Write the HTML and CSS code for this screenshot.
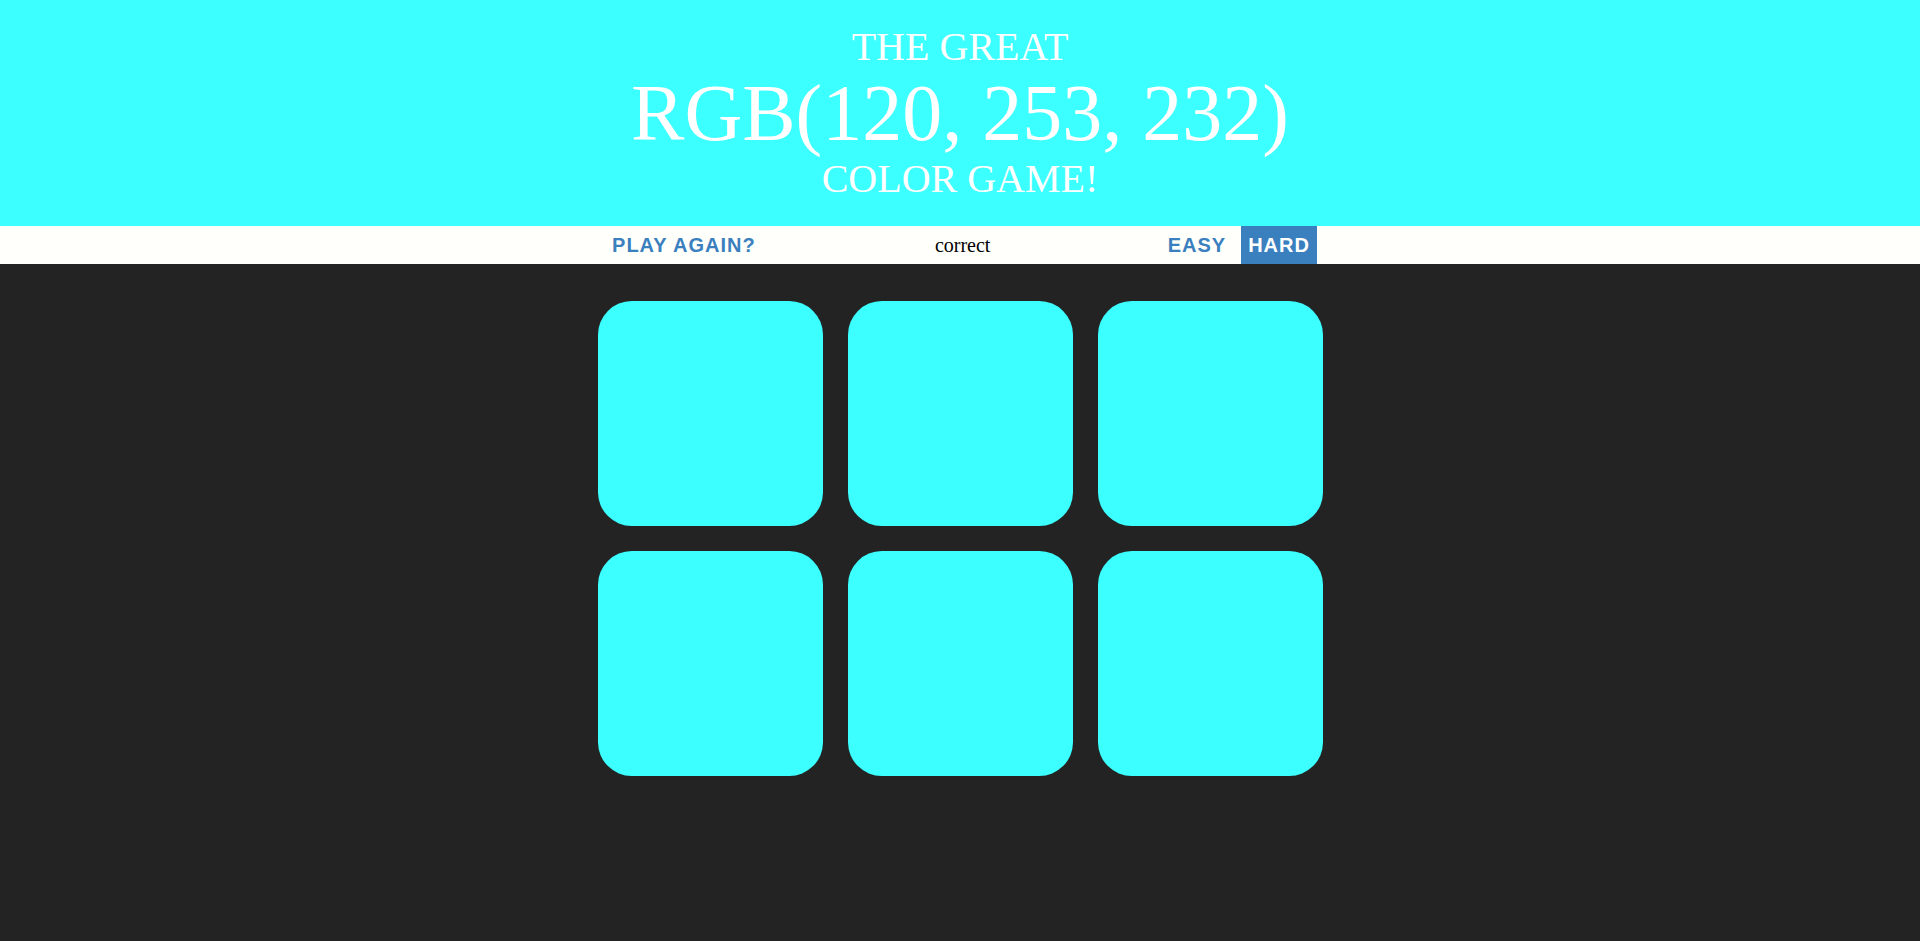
FILE: index.html
```html
<!DOCTYPE html>
<html lang="en">
<head>
<meta charset="utf-8">
<title>Color Game</title>
<link rel="stylesheet" href="styles.css">
</head>
<body>
<h1 class="header">
  <span class="line">The Great</span>
  <span class="line color-display">RGB(120, 253, 232)</span>
  <span class="line">Color Game!</span>
</h1>
<div class="stripe">
  <button class="btn btn-reset">Play Again?</button>
  <span class="message">correct</span>
  <button class="btn btn-mode">Easy</button>
  <button class="btn btn-mode btn-hard selected">Hard</button>
</div>
<div class="container">
  <div class="square"></div>
  <div class="square"></div>
  <div class="square"></div>
  <div class="square"></div>
  <div class="square"></div>
  <div class="square"></div>
</div>
</body>
</html>
```
FILE: styles.css
```css
html, body {
  margin: 0;
  padding: 0;
}
body {
  background: #232323;
  font-family: "Liberation Serif", "Times New Roman", serif;
  min-height: 941px;
}
.header {
  margin: 0;
  padding: 25px 0;
  background: #3cffff;
  color: #ffffff;
  font-weight: normal;
  font-size: 40px;
  line-height: 1.1;
  text-align: center;
  text-transform: uppercase;
}
.line {
  display: block;
}
.color-display {
  font-size: 200%;
}
.stripe {
  display: flex;
  justify-content: center;
  align-items: stretch;
  height: 38px;
  padding-left: 3.5px;
  background: #fffffb;
  color: #000;
}
.btn {
  border: none;
  background: none;
  margin: 0;
  padding: 0 6px;
  height: 38px;
  line-height: 38px;
  font-family: "Liberation Sans", Arial, sans-serif;
  font-size: 20px;
  font-weight: 700;
  letter-spacing: 1px;
  text-transform: uppercase;
  color: #3a80bf;
}
.btn-reset {
  margin-right: 9px;
}
.message {
  width: 384px;
  text-align: center;
  font-size: 20px;
  line-height: 38px;
  margin-right: 7px;
}
.btn-hard {
  margin-left: 8.5px;
  padding: 0 7.5px;
}
.selected {
  background: #3a80bf;
  color: #ffffff;
}
.container {
  width: 725px;
  margin: 37px auto 0;
  display: grid;
  grid-template-columns: repeat(3, 225px);
  grid-auto-rows: 225px;
  gap: 25px;
}
.square {
  background: #3cffff;
  border-radius: 15%;
}
```
